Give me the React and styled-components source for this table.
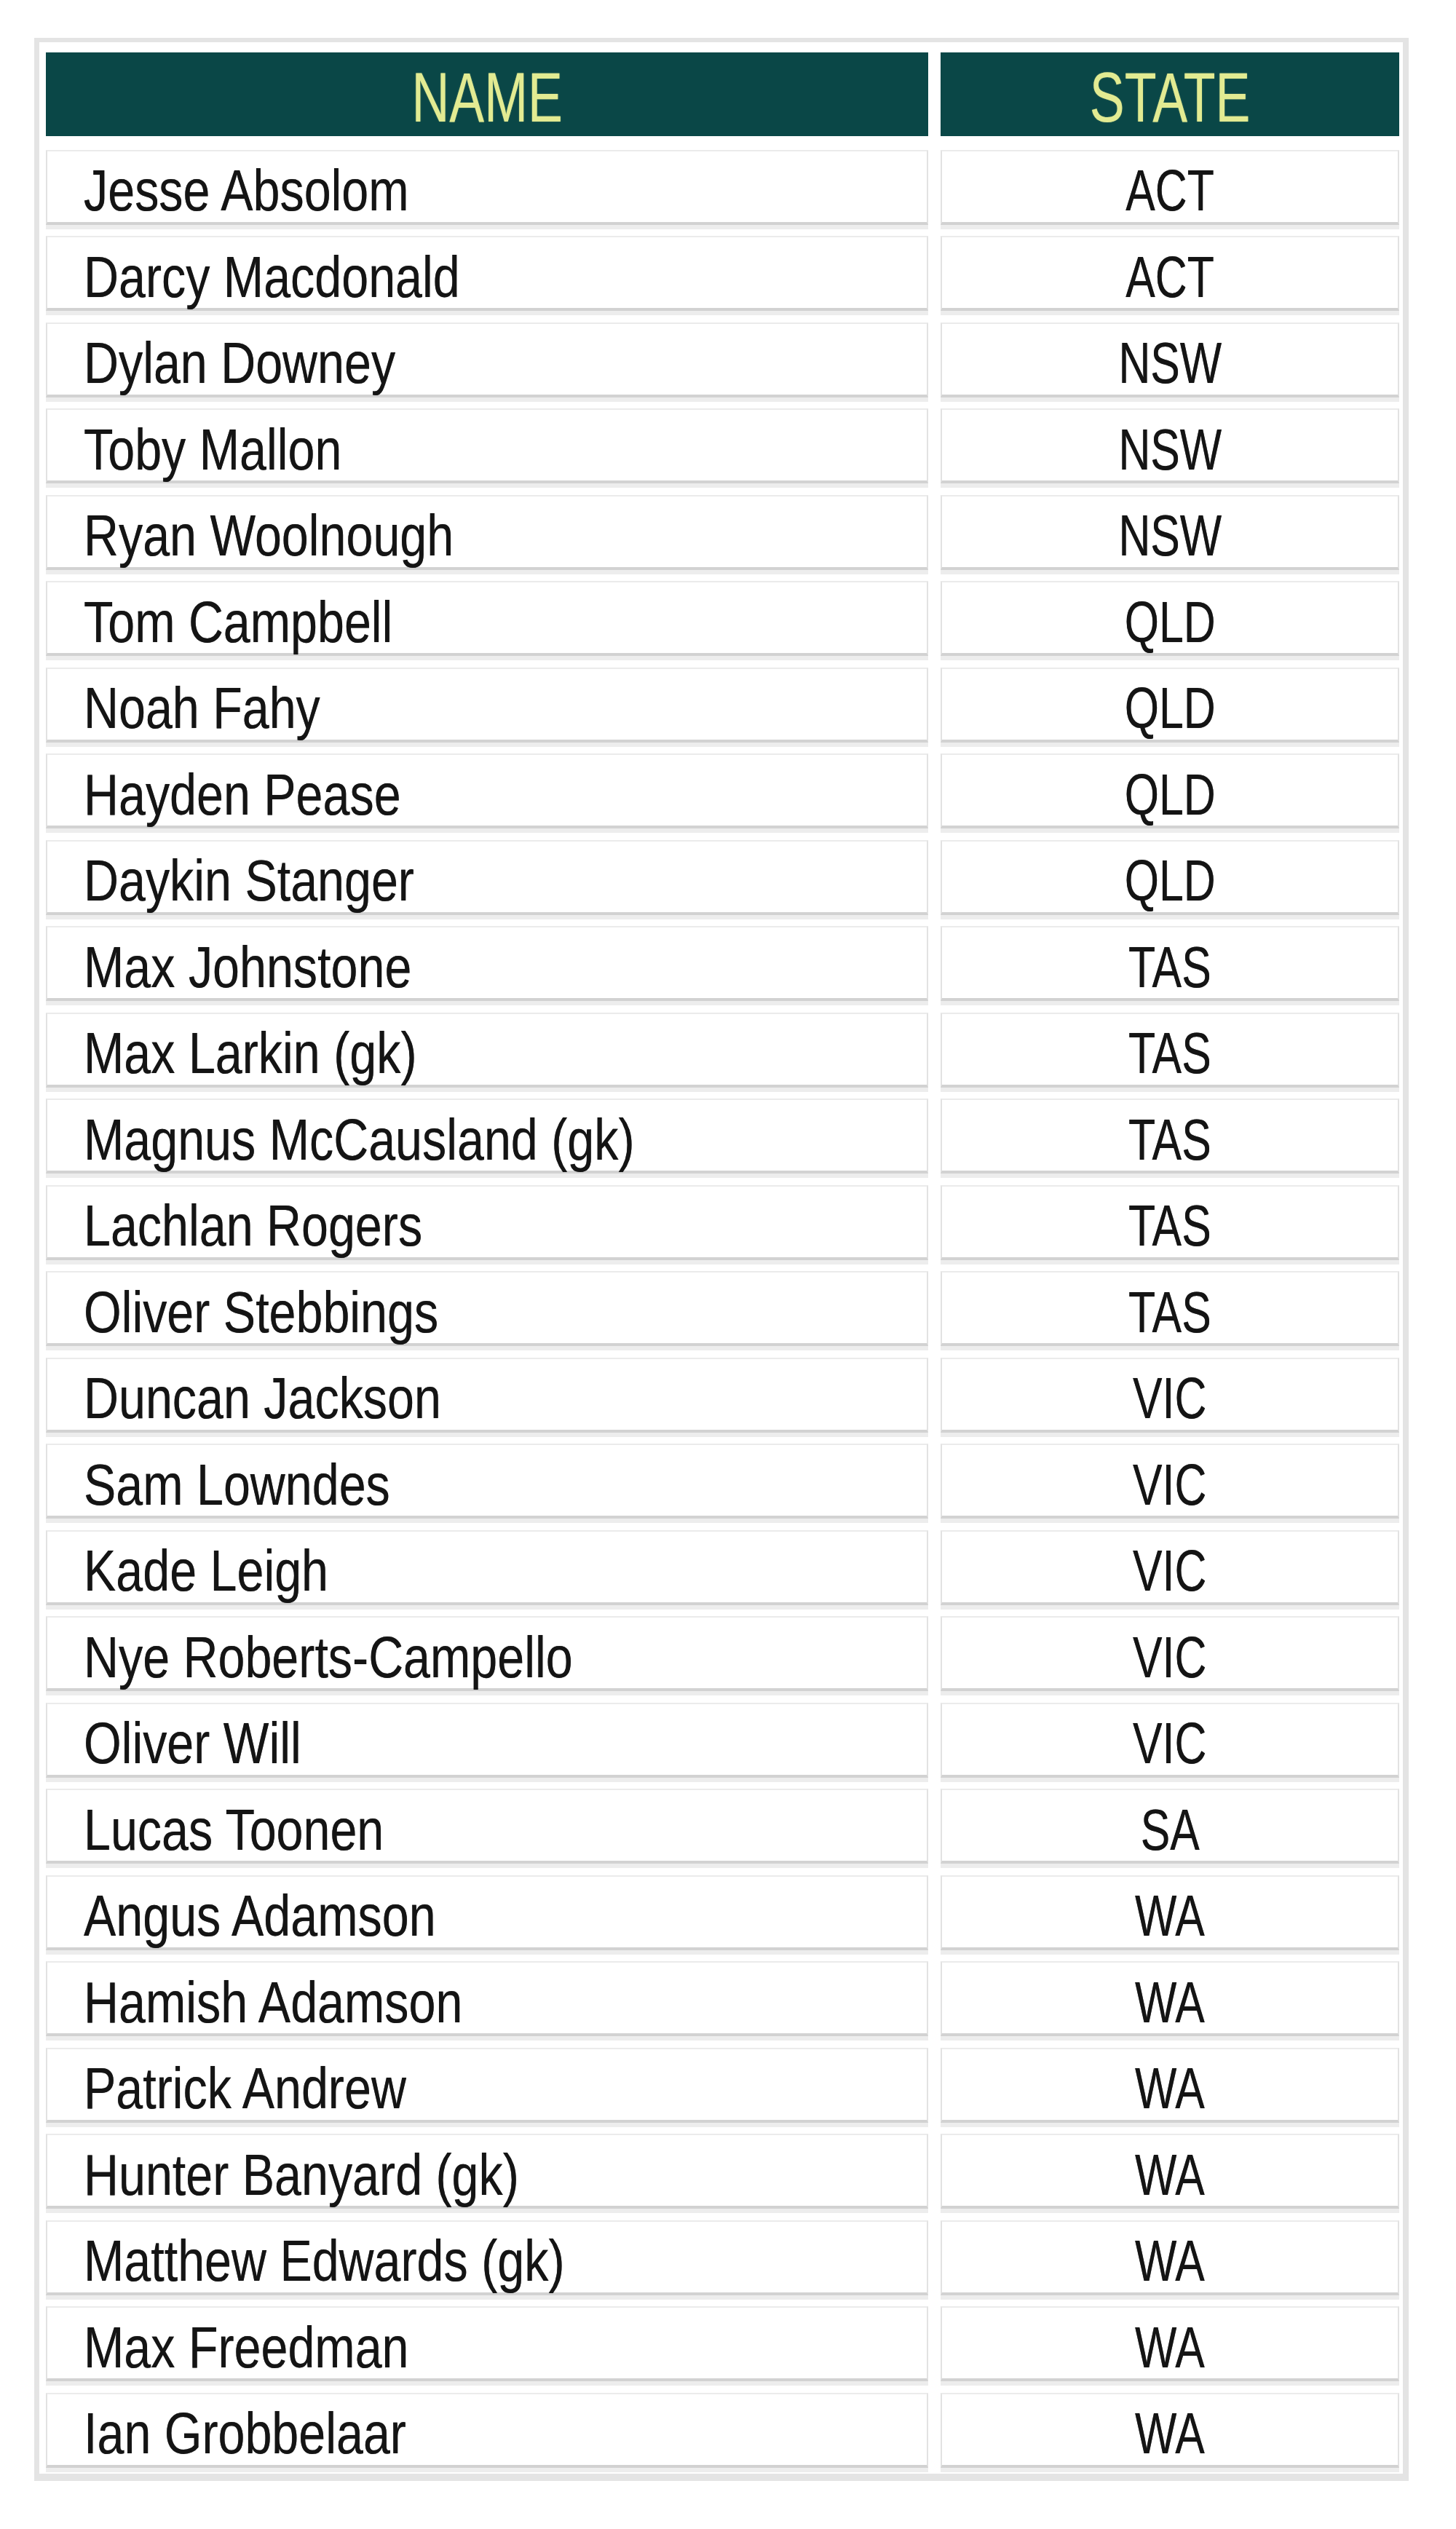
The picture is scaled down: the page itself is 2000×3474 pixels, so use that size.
import React from "react";
import styled, { createGlobalStyle } from "styled-components";

const Global = createGlobalStyle`
  html, body {
    margin: 0;
    padding: 0;
    background: #ffffff;
  }
  body {
    font-family: "Liberation Sans", Arial, sans-serif;
  }
`;

const Page = styled.div`
  padding: 52px 0 0 47px;
  min-height: 3474px;
  box-sizing: border-box;
  background: #ffffff;
`;

const Frame = styled.div`
  width: 1888px;
  box-sizing: border-box;
  border-style: solid;
  border-color: #e4e4e4;
  border-width: 6px 8px 10px 7px;
  padding: 14px 5px 8px 9px;
  background: #ffffff;
`;

const Table = styled.div`
  display: flex;
  flex-direction: column;
  gap: 15.5px;
`;

const Row = styled.div`
  display: grid;
  grid-template-columns: 1212px 630px;
  column-gap: 17px;
  margin-bottom: ${(p) => (p.$head ? "3px" : "0")};
`;

const HeadCell = styled.div`
  height: 115px;
  background: #0a4747;
  color: #e2eb92;
  font-family: "Liberation Sans", Arial, sans-serif;
  font-size: 97px;
  line-height: 1;
  display: flex;
  align-items: center;
  justify-content: center;
  padding-top: 8px;
  box-sizing: border-box;
  text-shadow: 0 0 2px rgba(226, 235, 146, 0.45);
`;

const Cell = styled.div`
  height: 103px;
  box-sizing: border-box;
  background: #ffffff;
  border-style: solid;
  border-color: #ebebeb #e2e2e2 #d2d2d2 #e2e2e2;
  border-width: 2px 2px 4px 2px;
  box-shadow: 0 6px 0 #ededed;
  color: #141414;
  font-family: "Liberation Sans", Arial, sans-serif;
  font-size: 80px;
  line-height: 1;
  display: flex;
  align-items: center;
  justify-content: ${(p) => (p.$center ? "center" : "flex-start")};
  padding-left: ${(p) => (p.$center ? "0" : "50px")};
  padding-top: 12px;
  white-space: nowrap;
`;

const Condensed = styled.span`
  display: inline-block;
  transform: scaleX(${(p) => p.$ratio || 0.83});
  transform-origin: ${(p) => (p.$center ? "center" : "left")} center;
  text-shadow: 0 0 0.8px rgba(0, 0, 0, 0.7);
`;

const HeadText = styled.span`
  display: inline-block;
  transform: scaleX(0.74);
  transform-origin: center center;
`;

const players = [
  ["Jesse Absolom", "ACT"],
  ["Darcy Macdonald", "ACT"],
  ["Dylan Downey", "NSW"],
  ["Toby Mallon", "NSW"],
  ["Ryan Woolnough", "NSW"],
  ["Tom Campbell", "QLD"],
  ["Noah Fahy", "QLD"],
  ["Hayden Pease", "QLD"],
  ["Daykin Stanger", "QLD"],
  ["Max Johnstone", "TAS"],
  ["Max Larkin (gk)", "TAS"],
  ["Magnus McCausland (gk)", "TAS"],
  ["Lachlan Rogers", "TAS"],
  ["Oliver Stebbings", "TAS"],
  ["Duncan Jackson", "VIC"],
  ["Sam Lowndes", "VIC"],
  ["Kade Leigh", "VIC"],
  ["Nye Roberts-Campello", "VIC"],
  ["Oliver Will", "VIC"],
  ["Lucas Toonen", "SA"],
  ["Angus Adamson", "WA"],
  ["Hamish Adamson", "WA"],
  ["Patrick Andrew", "WA"],
  ["Hunter Banyard (gk)", "WA"],
  ["Matthew Edwards (gk)", "WA"],
  ["Max Freedman", "WA"],
  ["Ian Grobbelaar", "WA"],
];

export default function App() {
  return (
    <Page>
      <Global />
      <Frame>
        <Table>
          <Row $head>
            <HeadCell>
              <HeadText>NAME</HeadText>
            </HeadCell>
            <HeadCell>
              <HeadText>STATE</HeadText>
            </HeadCell>
          </Row>
          {players.map(([name, state]) => (
            <Row key={name}>
              <Cell>
                <Condensed>{name}</Condensed>
              </Cell>
              <Cell $center>
                <Condensed $center $ratio={0.76}>
                  {state}
                </Condensed>
              </Cell>
            </Row>
          ))}
        </Table>
      </Frame>
    </Page>
  );
}
